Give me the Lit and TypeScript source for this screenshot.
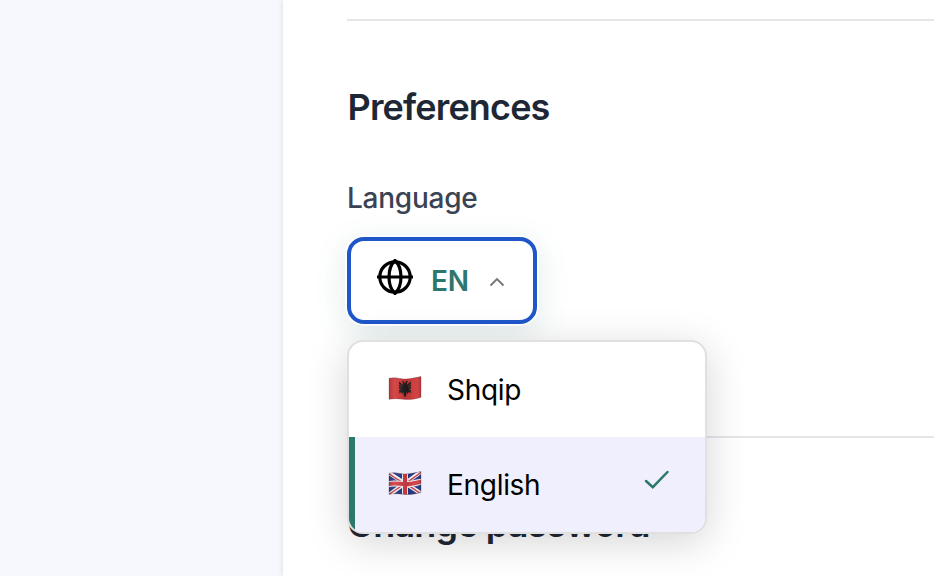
import { LitElement, html, css, svg } from "lit";
import { customElement, property, state } from "lit/decorators.js";
import { classMap } from "lit/directives/class-map.js";

const globeIcon = svg`
  <g fill="none" stroke="#000" stroke-width="3.2">
    <circle cx="18" cy="18" r="15.2"/>
    <path d="M0 18h36"/>
    <path d="M18 1.500C10 9 10 27 18 34.500M18 1.500c8 7.500 8 25.500 0 33" stroke-linejoin="round" stroke-linecap="round"/>
  </g>`;

@customElement("flag-icon")
class FlagIcon extends LitElement {
  @property() code = "";
  static styles = css`
    :host { display: block; width: 34px; height: 28px; }
    svg { display: block; }
  `;
  render() {
    const wave = "M1 3.300C6 1.900 10 3.300 14 3.800C20 4.600 27 2.700 33 1.500V22.300C28 24 21 25.200 15 24.300C10 23.600 6 23.400 1 24.300Z";
    const albania = svg`
      <rect width="34" height="28" fill="#cf3636"/>
      <path d="M16.900 8.800L15.800 6.200 13.800 6.300 14.800 7.500 15.200 10 13.800 8.800 11 6.800V13.500L13 14.500 11 15 11.500 18.500 13.200 17 14 19 15.400 17 15.500 20 16.900 22.500 18.300 20 18.400 17 19.800 19 20.600 17 22.500 18.300 23 15 21 14.500 23 13.300V6.500L20 8.800 18.600 10 19 7.500 20 6.200 18 6Z" fill="#211b1c"/>
      <path d="M11 9.300l3 1.600M11 11.600l2.700.9M23 9.100l-3 1.800M23 11.400l-2.700 1.100" stroke="#8f2c2d" stroke-width=".7"/>`;
    const britain = svg`
      <rect width="34" height="28" fill="#20347f"/>
      <path d="M0 2.500L34 24M34 1L0 25.500" stroke="#f4f3f7" stroke-width="4"/>
      <path d="M0 3.200L15 12.800M19 14.400L34 24.500M34 1.600L20 11.800M14 15.500L0 25" stroke="#c53c45" stroke-width="1.500"/>
      <path d="M17 0V28M0 14.300C6 12.500 11 14 17 14.200C23 14.300 28 12.800 34 11.500" fill="none" stroke="#f4f3f7" stroke-width="6"/>
      <path d="M17 0V28M0 14.300C6 12.500 11 14 17 14.200C23 14.300 28 12.800 34 11.500" fill="none" stroke="#d03b43" stroke-width="4"/>`;
    return html`<svg width="34" height="28" viewBox="0 0 34 28">
      <defs>
        <clipPath id="wave"><path d=${wave}/></clipPath>
        <linearGradient id="fold">
          <stop offset="0" stop-color="#000" stop-opacity=".15"/>
          <stop offset=".2" stop-color="#fff" stop-opacity=".1"/>
          <stop offset=".55" stop-color="#000" stop-opacity=".08"/>
          <stop offset=".82" stop-color="#fff" stop-opacity=".06"/>
          <stop offset="1" stop-color="#000" stop-opacity=".2"/>
        </linearGradient>
      </defs>
      <g clip-path="url(#wave)">
        ${this.code === "sq" ? albania : britain}
        <rect width="34" height="28" fill="url(#fold)"/>
      </g>
      <path d=${wave} fill="none" stroke="#502030" stroke-opacity=".3" stroke-width=".8"/>
    </svg>`;
  }
}

@customElement("language-select")
class LanguageSelect extends LitElement {
  @state() open = true;
  @state() selected = "en";
  private languages = [
    { code: "sq", name: "Shqip" },
    { code: "en", name: "English" },
  ];
  static styles = css`
    :host { display: block; position: relative; width: 360px; }
    * { box-sizing: border-box; }
    .trigger {
      display: flex; align-items: center; width: 190px; height: 87px; padding: 0 0 0 26px;
      font: 600 28px/34px Inter, "Liberation Sans", sans-serif; color: #2c776e;
      background: #fff; border: 4px solid #1f57ca; border-radius: 17px;
      box-shadow: 0 0 0 2px #fff, 0 8px 32px rgba(44, 119, 110, .16);
    }
    .globe { display: block; margin: 0 18px 7px 0; }
    .code { width: 37px; text-align: left; letter-spacing: -.3px; }
    .chevron { display: block; margin: 3px 0 0 21px; }
    .menu {
      position: absolute; left: 0; top: 103px; width: 360px; height: 194px; overflow: hidden;
      background: #fff; border: 2px solid #e0e0e0; border-radius: 16px;
      box-shadow: 0 8px 40px rgba(0, 0, 0, .17);
    }
    .option {
      display: flex; align-items: center; height: 95px; padding: 0 35px 0 33px;
      font: 400 28px/34px Inter, "Liberation Sans", sans-serif; color: #000;
      letter-spacing: -.3px; border-left: 6px solid transparent;
    }
    .option.selected { background: #f0effd; border-left-color: #2c776e; }
    flag-icon { margin: 0 25px 1px 0; }
    .name { flex: 1; }
    .check { display: block; margin-bottom: 9px; }
  `;
  render() {
    return html`
      <button class="trigger" @click=${() => (this.open = !this.open)}>
        <svg class="globe" width="36" height="36" viewBox="0 0 36 36">${globeIcon}</svg>
        <span class="code">${this.selected === "en" ? "EN" : "SQ"}</span>
        <svg class="chevron" width="16" height="10" viewBox="0 0 16 10">
          <path d="M1.500 8.500L8 2l6.500 6.500" fill="none" stroke="#777" stroke-width="1.900"/>
        </svg>
      </button>
      ${this.open ? html`<div class="menu">
        ${this.languages.map((l) => html`
          <div class=${classMap({ option: true, selected: l.code === this.selected })}
               @click=${() => (this.selected = l.code)}>
            <flag-icon .code=${l.code}></flag-icon>
            <span class="name">${l.name}</span>
            ${l.code === this.selected ? html`<svg class="check" width="26" height="20" viewBox="0 0 26 20">
              <path d="M2 11L8.800 17.200L23.500 2" fill="none" stroke="#2c776e" stroke-width="2.500" stroke-linecap="round"/>
            </svg>` : ""}
          </div>`)}
      </div>` : ""}`;
  }
}

@customElement("app-root")
class AppRoot extends LitElement {
  static styles = css`
    :host {
      display: flex; height: 576px; overflow: hidden; background: #f7f8fd;
      font-family: Inter, "Liberation Sans", sans-serif;
    }
    .side { flex: 0 0 283px; }
    .panel {
      flex: 1; display: flex; flex-direction: column; padding: 19px 0 0 64px; background: #fff;
      box-shadow: 0 0 6px rgba(20, 20, 50, .13);
    }
    .rule { flex: none; height: 2px; background: #e5e5ea; }
    h2 {
      margin: 63px 0 0; font-size: 36px; line-height: 46px; font-weight: 600; color: #1e2736;
      letter-spacing: -.85px; text-indent: .6px; white-space: nowrap;
    }
    .label {
      margin: 51px 0 21px; font-size: 28px; line-height: 35px; font-weight: 500; color: #3a4354;
      letter-spacing: -.25px;
    }
    language-select { z-index: 1; }
    .lower { margin-top: 112px; }
  `;
  render() {
    return html`
      <div class="side"></div>
      <main class="panel">
        <div class="rule"></div>
        <h2>Preferences</h2>
        <div class="label">Language</div>
        <language-select></language-select>
        <div class="rule lower"></div>
        <h2>Change password</h2>
      </main>`;
  }
}
